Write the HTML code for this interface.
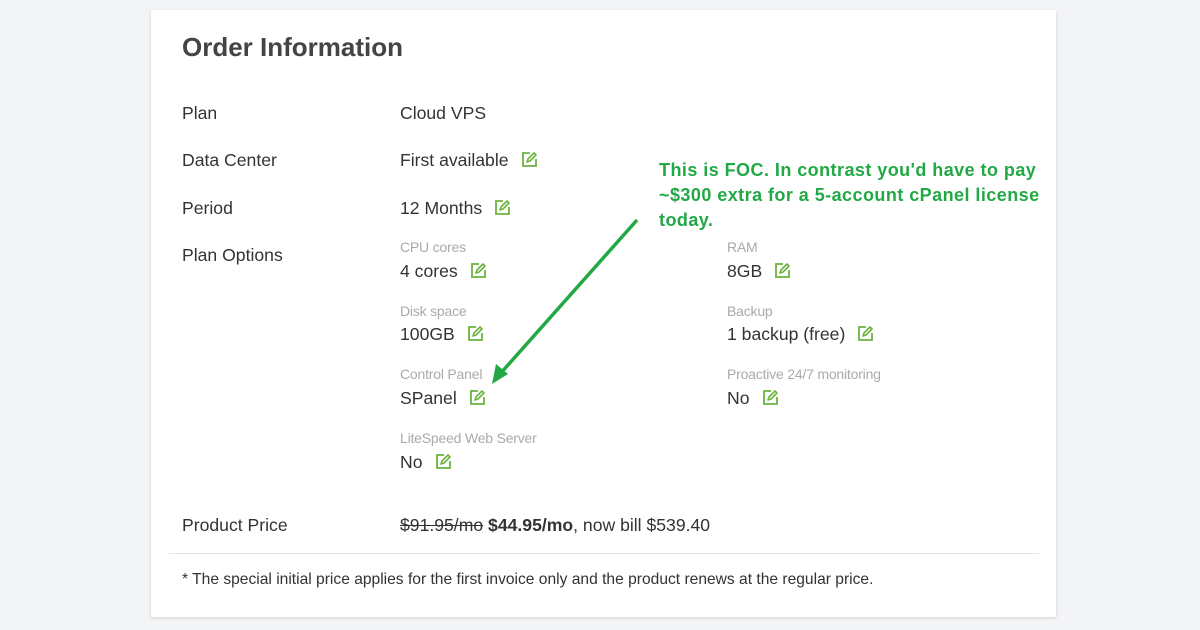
<!DOCTYPE html>
<html><head><style>
body{margin:0;width:1200px;height:630px;background:#f3f4f6;font-family:"Liberation Sans",Arial,sans-serif;position:relative;overflow:hidden}
.card{position:absolute;left:151px;top:10px;width:905px;height:607px;background:#fff;box-shadow:0 1px 3px rgba(0,0,0,.15);border-radius:2px}
.t{position:absolute;white-space:nowrap;color:#333;font-size:17.6px;line-height:20px;transform:translateY(-50%)}
.s{position:absolute;white-space:nowrap;color:#aaa;font-size:14px;line-height:16px;transform:translateY(-50%);letter-spacing:-.2px}
.e{display:inline-block;width:17px;height:17px;vertical-align:-2px;margin-left:12px}
</style></head><body>
<div class="card"></div>
<div class="t" style="left:182px;top:47px;font-size:26px;font-weight:bold;color:#444;line-height:30px">Order Information</div>
<svg width="0" height="0" style="position:absolute"><defs><symbol id="ed" viewBox="0 0 17 17"><path d="M9 2H2v13h13V8" fill="none" stroke="#6cb33f" stroke-width="1.8"/><path d="M6 11l1-3 6-6 2 2-6 6z" fill="none" stroke="#6cb33f" stroke-width="1.6" stroke-linejoin="round"/></symbol></defs></svg>

<div class="t" style="left:182px;top:113px">Plan</div>
<div class="t" style="left:400px;top:113px">Cloud VPS</div>
<div class="t" style="left:182px;top:160px">Data Center</div>
<div class="t" style="left:400px;top:160px">First available<svg class="e"><use href="#ed"/></svg></div>
<div class="t" style="left:182px;top:208px">Period</div>
<div class="t" style="left:400px;top:208px">12 Months<svg class="e"><use href="#ed"/></svg></div>
<div class="t" style="left:182px;top:255px">Plan Options</div>

<div class="s" style="left:400px;top:247px">CPU cores</div>
<div class="t" style="left:400px;top:271px">4 cores<svg class="e"><use href="#ed"/></svg></div>
<div class="s" style="left:727px;top:247px">RAM</div>
<div class="t" style="left:727px;top:271px">8GB<svg class="e"><use href="#ed"/></svg></div>
<div class="s" style="left:400px;top:311px">Disk space</div>
<div class="t" style="left:400px;top:334px">100GB<svg class="e"><use href="#ed"/></svg></div>
<div class="s" style="left:727px;top:311px">Backup</div>
<div class="t" style="left:727px;top:334px">1 backup (free)<svg class="e"><use href="#ed"/></svg></div>
<div class="s" style="left:400px;top:374px">Control Panel</div>
<div class="t" style="left:400px;top:398px">SPanel<svg class="e"><use href="#ed"/></svg></div>
<div class="s" style="left:727px;top:374px">Proactive 24/7 monitoring</div>
<div class="t" style="left:727px;top:398px">No<svg class="e"><use href="#ed"/></svg></div>
<div class="s" style="left:400px;top:438px">LiteSpeed Web Server</div>
<div class="t" style="left:400px;top:462px">No<svg class="e"><use href="#ed"/></svg></div>

<div class="t" style="left:182px;top:525px">Product Price</div>
<div class="t" style="left:400px;top:525px"><span style="text-decoration:line-through">$91.95/mo</span> <b>$44.95/mo</b>, now bill $539.40</div>
<div style="position:absolute;left:169px;top:553px;width:870px;height:1px;background:#e3e3e3"></div>
<div class="t" style="left:182px;top:580px;font-size:15.6px">* The special initial price applies for the first invoice only and the product renews at the regular price.</div>

<div style="position:absolute;left:659px;top:158px;color:#22a845;font-weight:bold;font-size:18px;letter-spacing:.45px;line-height:25px;width:420px">This is FOC. In contrast you'd have to pay<br>~$300 extra for a 5-account cPanel license<br>today.</div>
<svg style="position:absolute;left:0;top:0" width="1200" height="630"><line x1="637" y1="220" x2="500" y2="374" stroke="#22a845" stroke-width="3.5"/><path d="M492 384l4-20 12 10z" fill="#22a845"/></svg>
</body></html>
